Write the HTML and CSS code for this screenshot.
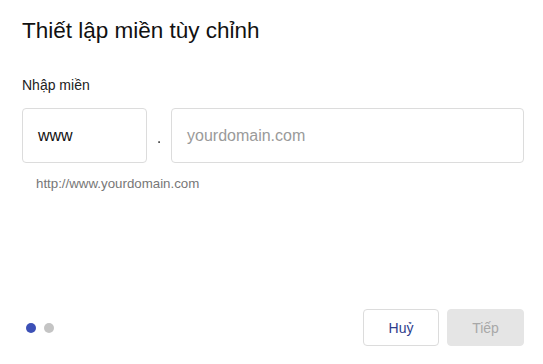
FILE: index.html
```html
<!DOCTYPE html>
<html lang="vi">
<head>
<meta charset="utf-8">
<link rel="stylesheet" href="styles.css">
</head>
<body>
<div class="dialog">
  <h1 class="title">Thiết lập miền tùy chỉnh</h1>
  <div class="label">Nhập miền</div>
  <div class="fields">
    <div class="field sub">www</div>
    <span class="dot">.</span>
    <div class="field domain placeholder">yourdomain.com</div>
  </div>
  <div class="hint">http://www.yourdomain.com</div>
  <div class="spacer"></div>
  <div class="footer">
    <div class="steps">
      <span class="step active"></span>
      <span class="step"></span>
    </div>
    <div class="actions">
      <button class="btn cancel">Huỷ</button>
      <button class="btn next" disabled>Tiếp</button>
    </div>
  </div>
</div>
</body>
</html>
```
FILE: styles.css
```css
html, body {
  margin: 0;
  padding: 0;
  background: #fff;
}
body {
  font-family: "Liberation Sans", Arial, sans-serif;
  color: #202124;
}
.dialog {
  width: 543px;
  height: 364px;
  box-sizing: border-box;
  padding: 17px 19px 18px 22px;
  display: flex;
  flex-direction: column;
}
.title {
  margin: 0;
  font-size: 22.5px;
  font-weight: 400;
  line-height: 28px;
  color: #111;
}
.label {
  margin-top: 31px;
  font-size: 14px;
  line-height: 18px;
  color: #222;
}
.fields {
  margin-top: 14px;
  display: flex;
  align-items: center;
}
.field {
  box-sizing: border-box;
  height: 55px;
  border: 1px solid #dcdcdc;
  border-radius: 4px;
  display: flex;
  align-items: center;
  font-size: 16px;
}
.sub {
  width: 125px;
  padding-left: 15px;
  color: #111;
}
.dot {
  width: 24px;
  display: flex;
  justify-content: center;
  font-size: 17px;
  line-height: 20px;
  color: #444;
  padding-top: 4px;
  -webkit-font-smoothing: antialiased;
  will-change: transform;
}
.domain {
  flex: 1;
  padding-left: 15px;
}
.placeholder {
  color: #9a9a9a;
}
.hint {
  margin-top: 13px;
  padding-left: 14px;
  font-size: 13.3px;
  line-height: 16px;
  color: #777;
}
.spacer {
  flex: 1;
}
.footer {
  display: flex;
  align-items: center;
  justify-content: space-between;
}
.steps {
  display: flex;
  gap: 8px;
  padding-left: 4px;
}
.step {
  width: 10px;
  height: 10px;
  border-radius: 50%;
  background: #c4c4c4;
}
.step.active {
  background: #3c50b6;
}
.actions {
  display: flex;
  gap: 8px;
}
.btn {
  height: 37px;
  width: 76px;
  border-radius: 4px;
  font-family: "Liberation Sans", Arial, sans-serif;
  font-size: 14px;
  border: 1px solid #dcdcdc;
  background: #fff;
}
.cancel {
  color: #2e3d8c;
}
.next {
  background: #e5e5e5;
  border-color: #e5e5e5;
  color: #a8a8a8;
  width: 77px;
}
```
